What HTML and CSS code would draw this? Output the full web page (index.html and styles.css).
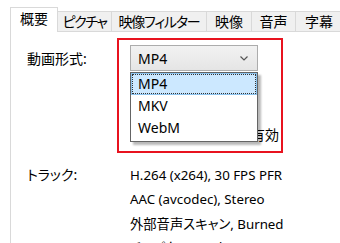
FILE: index.html
```html
<!DOCTYPE html>
<html lang="ja">
<head>
<meta charset="utf-8">
<link rel="stylesheet" href="styles.css">
</head>
<body>
<div class="tabs">
  <div class="tab active t1">概要</div>
  <div class="tab t2">ピクチャ</div>
  <div class="tab t3">映像フィルター</div>
  <div class="tab t4">映像</div>
  <div class="tab t5">音声</div>
  <div class="tab t6">字幕</div>
</div>
<div class="panel">
  <div class="row format-row">
    <div class="label">動画形式:</div>
    <div class="combo">
      <span>MP4</span>
      <svg class="chev" width="8" height="5" viewBox="0 0 8 5"><path d="M0.5 0.5 L4 4 L7.5 0.5" fill="none" stroke="#555" stroke-width="1.2"/></svg>
    </div>
  </div>
  <div class="row opts">
    <div class="label"></div>
    <div class="checks">
      <div class="check"><span class="box"></span>A/V 開始を揃える</div>
      <div class="check"><span class="box"></span>Web 最適化</div>
      <div class="check"><span class="box"></span>iPod 5G サポート有効</div>
    </div>
  </div>
  <div class="row tracks">
    <div class="label">トラック:</div>
    <div class="values">
      <div>H.264 (x264), 30 FPS PFR</div>
      <div>AAC (avcodec), Stereo</div>
      <div>外部音声スキャン, Burned</div>
      <div>チャプターマーカー</div>
    </div>
  </div>
</div>
<div class="dropdown">
  <div class="item selected">MP4</div>
  <div class="item">MKV</div>
  <div class="item">WebM</div>
</div>
<div class="highlight"></div>
</body>
</html>
```
FILE: styles.css
```css
html, body {
  margin: 0;
  padding: 0;
  background: #ffffff;
  overflow: hidden;
}
body {
  width: 340px;
  height: 243px;
  font-family: "Noto Sans", "Noto Sans CJK JP", sans-serif;
  font-feature-settings: "palt" 1;
  font-variant-east-asian: proportional-width;
  font-size: 14px;
  color: #000000;
  position: relative;
}
.tabs {
  display: flex;
  align-items: flex-end;
  height: 23px;
  padding-top: 8px;
  margin-left: 10px;
}
.tab {
  flex: none;
  height: 19px;
  line-height: 19px;
  border: 1px solid #d9d9d9;
  border-bottom: none;
  background: #f0f0f0;
  margin-left: -1px;
  white-space: nowrap;
  text-align: center;
  box-sizing: content-box;
  overflow: hidden;
}
.t1 { width: 46px; }
.t2 { width: 53px; letter-spacing: -1.5px; }
.t3 { width: 94px; letter-spacing: -1.2px; }
.t4 { width: 44px; }
.t5 { width: 43px; }
.t6 { width: 46px; }
.tab.active {
  height: 24px;
  line-height: 22px;
  background: #ffffff;
  margin-left: 0;
  margin-bottom: -1px;
  position: relative;
  z-index: 2;
}
.panel {
  border-top: 1px solid #d9d9d9;
  border-left: 1px solid #d9d9d9;
  margin-left: 10px;
  height: 220px;
  padding: 13px 0 0 16px;
  background: #ffffff;
}
.row {
  display: flex;
}
.label {
  width: 103px;
  flex: none;
}
.format-row {
  align-items: center;
}
.combo {
  border: 1px solid #acacac;
  background: linear-gradient(#f2f2f2, #e5e5e5);
  display: flex;
  align-items: center;
  justify-content: space-between;
  padding: 0 9px 0 7px;
  box-sizing: border-box;
  width: 128px;
  height: 26px;
}
.chev {
  display: block;
}
.checks {
  display: flex;
  flex-direction: column;
}
.check {
  display: flex;
  align-items: center;
  height: 24.5px;
  gap: 2px;
  white-space: nowrap;
}
.check:last-child {
  margin-top: 2px;
}
.box {
  width: 13px;
  height: 13px;
  border: 1px solid #333;
  box-sizing: border-box;
  background: #fff;
}
.tracks {
  margin-top: 16px;
  line-height: 24.5px;
}
.values {
  white-space: nowrap;
  font-size: 13.3px;
}
.dropdown {
  position: absolute;
  left: 130px;
  top: 72px;
  width: 128px;
  height: 70px;
  box-sizing: border-box;
  border: 1px solid #646464;
  background: #ffffff;
  box-shadow: 3px 3px 2px rgba(0, 0, 0, 0.28);
  z-index: 5;
}
.item {
  height: 22px;
  line-height: 22px;
  padding-left: 7px;
  box-sizing: border-box;
}
.item.selected {
  background: #cce8ff;
  border: 1px solid #8cc4f0;
  outline: 1px dotted #333;
  outline-offset: -2px;
  padding-left: 6px;
  line-height: 20px;
}
.highlight {
  position: absolute;
  left: 117px;
  top: 38px;
  width: 166px;
  height: 115px;
  box-sizing: border-box;
  border: 2px solid #e8131f;
  z-index: 6;
}
```
